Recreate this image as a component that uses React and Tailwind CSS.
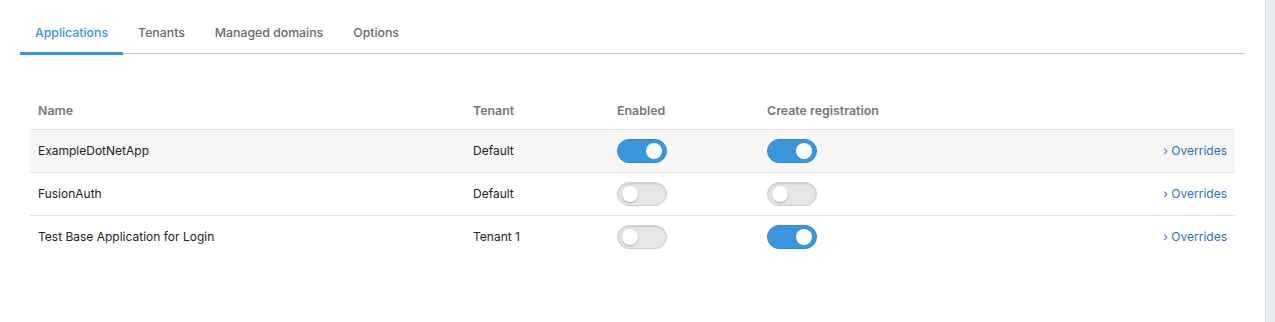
import React from 'react';

const tabs = ['Applications', 'Tenants', 'Managed domains', 'Options'];

const rows = [
  { name: 'ExampleDotNetApp', tenant: 'Default', enabled: true, register: true, hover: true },
  { name: 'FusionAuth', tenant: 'Default', enabled: false, register: false },
  { name: 'Test Base Application for Login', tenant: 'Tenant 1', enabled: false, register: true },
];

function Toggle({ on }) {
  return on ? (
    <div className="relative w-[50px] h-[24px] rounded-full bg-[#3a95db] border border-[#3389cb]">
      <div className="absolute right-[4px] top-[3px] w-[16px] h-[16px] rounded-full bg-white" />
    </div>
  ) : (
    <div className="relative w-[50px] h-[24px] rounded-full bg-[#e6e6e6] border border-[#cfcfcf] shadow-[inset_0_1px_2px_rgba(0,0,0,0.12)]">
      <div className="absolute left-[4px] top-[3px] w-[16px] h-[16px] rounded-full bg-white shadow-[0_1px_2px_rgba(0,0,0,0.25)]" />
    </div>
  );
}

export default function App() {
  return (
    <div className="flex w-full h-[322px] bg-white font-['Inter',sans-serif] text-[12px] text-[#222]">
      <div className="flex-1 px-[20px]">
        {/* tabs */}
        <div className="flex border-b border-[#c6c6c6]">
          {tabs.map((t, i) => (
            <div
              key={t}
              className={
                'px-[15px] pt-[23px] pb-[9px] leading-[20px] text-[12.3px] font-medium border-b-[3px] -mb-[2px] ' +
                (i === 0 ? 'text-[#3a95db] border-[#3a95db]' : 'text-[#6b6b6b] border-transparent')
              }
            >
              {t}
            </div>
          ))}
        </div>

        {/* table */}
        <div className="mx-[10px] mt-[38px] grid grid-cols-[435px_144px_150px_1fr_auto]">
          <div className="px-[8px] pt-[2px] h-[37px] flex items-center text-[12.4px] font-semibold text-[#777]">Name</div>
          <div className="px-[8px] pt-[2px] h-[37px] flex items-center text-[12.4px] font-semibold text-[#777]">Tenant</div>
          <div className="px-[8px] pt-[2px] h-[37px] flex items-center text-[12.4px] font-semibold text-[#777]">Enabled</div>
          <div className="px-[8px] pt-[2px] h-[37px] flex items-center text-[12.4px] font-semibold text-[#777]">Create registration</div>
          <div className="h-[37px]" />
          {rows.map((r) => (
            <div
              key={r.name}
              className={'col-span-5 grid grid-cols-subgrid h-[43px] items-center border-t border-[#e2e2e2] ' + (r.hover ? 'bg-[#f6f6f6]' : '')}
            >
              <div className="px-[8px]">{r.name}</div>
              <div className="px-[8px]">{r.tenant}</div>
              <div className="px-[8px]"><Toggle on={r.enabled} /></div>
              <div className="px-[8px]"><Toggle on={r.register} /></div>
              <div className="px-[8px] text-[#2f72b3]">› Overrides</div>
            </div>
          ))}
        </div>
      </div>
      <div className="w-[10px] bg-[#e7eaf0] border-l border-[#d6dae1]" />
    </div>
  );
}
